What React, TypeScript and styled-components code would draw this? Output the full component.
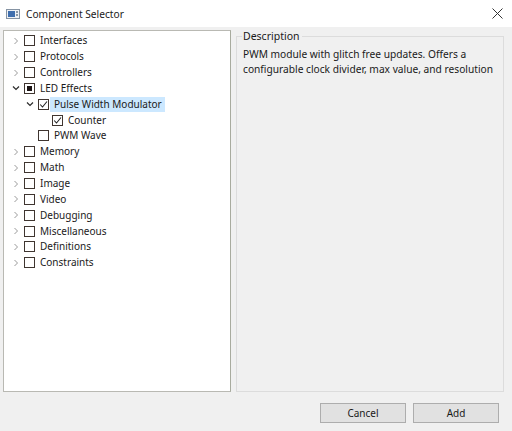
import React from "react";
import styled, { createGlobalStyle } from "styled-components";

const Global = createGlobalStyle`
  html, body { margin: 0; padding: 0; }
  body { width: 512px; height: 431px; overflow: hidden; background: #f0f0f0; font-family: "Noto Sans", "Open Sans", sans-serif; font-size: 10px; color: #000; }
`;

const Window = styled.div`
  width: 512px;
  height: 431px;
  display: flex;
  flex-direction: column;
  background: #f0f0f0;
`;

const TitleBar = styled.div`
  height: 27px;
  background: #fff;
  display: flex;
  align-items: center;
  padding: 0 0 0 6px;
  box-sizing: border-box;
`;

const TitleText = styled.span`
  margin-left: 6px;
  font-size: 10.2px;
  color: #1a1a1a;
  flex: 1;
`;

const CloseBtn = styled.div`
  width: 30px;
  height: 27px;
  display: flex;
  align-items: center;
  justify-content: center;
`;

const Body = styled.div`
  flex: 1;
  display: flex;
  flex-direction: column;
  padding: 3px 8px 10px 3px;
`;

const Panels = styled.div`
  display: flex;
  gap: 5px;
  height: 362px;
`;

const TreePanel = styled.div`
  width: 228px;
  box-sizing: border-box;
  background: #fff;
  border: 1px solid #b9b9b3;
  border-right-color: #a8ab9e;
  padding: 2px 0 0 0;
`;

const Row = styled.div<{ $level: number }>`
  height: 15.85px;
  display: flex;
  align-items: center;
  padding-left: ${(p) => 6 + p.$level * 14}px;
`;

const Arrow = styled.div`
  width: 12px;
  height: 12px;
  display: flex;
  align-items: center;
  justify-content: center;
  flex-shrink: 0;
`;

const Box = styled.div`
  width: 11px;
  height: 11px;
  box-sizing: border-box;
  border: 1px solid #3f3530;
  margin-left: 2px;
  display: flex;
  align-items: center;
  justify-content: center;
  flex-shrink: 0;
  background: #fff;
`;

const Partial = styled.div`
  width: 5px;
  height: 5px;
  background: #1c1414;
`;

const Label = styled.span<{ $selected?: boolean }>`
  margin-left: 1px;
  padding: 0 3px 0 4px;
  line-height: 15px;
  font-size: 10px;
  background: ${(p) => (p.$selected ? "#cce8ff" : "transparent")};
  color: #1a1a1a;
  white-space: nowrap;
`;

const Group = styled.div`
  flex: 1;
  position: relative;
  border: 1px solid #dcdcdc;
  margin-top: 6px;
  padding: 10px 2px 0 6px;
`;

const Legend = styled.span`
  position: absolute;
  top: -8px;
  left: 5px;
  padding: 0 2px 0 1px;
  font-size: 10.5px;
  background: #f0f0f0;
  color: #1a1a1a;
`;

const DescLine = styled.div`
  font-size: 10.2px;
  line-height: 15px;
  color: #1a1a1a;
  white-space: nowrap;
`;

const Buttons = styled.div`
  display: flex;
  justify-content: flex-end;
  gap: 7px;
  margin-top: 11px;
  padding-right: 5px;
`;

const Button = styled.button`
  width: 86px;
  height: 20px;
  box-sizing: border-box;
  border: 1px solid #adadad;
  background: #e1e1e1;
  font-family: inherit;
  font-size: 10px;
  color: #1a1a1a;
  padding: 0;
`;

const Chevron = ({ open }: { open?: boolean }) => (
  <svg width="8" height="8" viewBox="0 0 8 8">
    {open ? (
      <path d="M1 2.5 L4 5.5 L7 2.5" fill="none" stroke="#2b2b2b" strokeWidth="1.2" />
    ) : (
      <path d="M2.5 1 L5.5 4 L2.5 7" fill="none" stroke="#9a9a9a" strokeWidth="1" />
    )}
  </svg>
);

const Check = () => (
  <svg width="9" height="9" viewBox="0 0 9 9">
    <path d="M1.2 4.5 L3.5 7 L8 1.5" fill="none" stroke="#222" strokeWidth="1.1" />
  </svg>
);

type Item = { label: string; level: number; arrow?: "open" | "closed"; state?: "checked" | "partial"; selected?: boolean };

const items: Item[] = [
  { label: "Interfaces", level: 0, arrow: "closed" },
  { label: "Protocols", level: 0, arrow: "closed" },
  { label: "Controllers", level: 0, arrow: "closed" },
  { label: "LED Effects", level: 0, arrow: "open", state: "partial" },
  { label: "Pulse Width Modulator", level: 1, arrow: "open", state: "checked", selected: true },
  { label: "Counter", level: 2, state: "checked" },
  { label: "PWM Wave", level: 1 },
  { label: "Memory", level: 0, arrow: "closed" },
  { label: "Math", level: 0, arrow: "closed" },
  { label: "Image", level: 0, arrow: "closed" },
  { label: "Video", level: 0, arrow: "closed" },
  { label: "Debugging", level: 0, arrow: "closed" },
  { label: "Miscellaneous", level: 0, arrow: "closed" },
  { label: "Definitions", level: 0, arrow: "closed" },
  { label: "Constraints", level: 0, arrow: "closed" },
];

const AppIcon = () => (
  <svg width="14" height="10" viewBox="0 0 14 10">
    <rect x="0.5" y="0.5" width="13" height="9" fill="#eef1f5" stroke="#8593a3" />
    <rect x="2" y="2" width="7" height="6" fill="#3f6eae" />
    <rect x="10" y="2" width="2" height="2" fill="#8a98a8" />
    <rect x="10" y="5" width="2" height="2" fill="#8a98a8" />
  </svg>
);

export default function App() {
  return (
    <Window>
      <Global />
      <TitleBar>
        <AppIcon />
        <TitleText>Component Selector</TitleText>
        <CloseBtn>
          <svg width="11" height="11" viewBox="0 0 11 11">
            <path d="M0.5 0.5 L10.5 10.5 M10.5 0.5 L0.5 10.5" stroke="#333" strokeWidth="1" />
          </svg>
        </CloseBtn>
      </TitleBar>
      <Body>
        <Panels>
          <TreePanel>
            {items.map((it) => (
              <Row key={it.label} $level={it.level}>
                <Arrow>{it.arrow ? <Chevron open={it.arrow === "open"} /> : null}</Arrow>
                <Box>
                  {it.state === "partial" ? <Partial /> : it.state === "checked" ? <Check /> : null}
                </Box>
                <Label $selected={it.selected}>{it.label}</Label>
              </Row>
            ))}
          </TreePanel>
          <Group>
            <Legend>Description</Legend>
            <DescLine>PWM module with glitch free updates. Offers a</DescLine>
            <DescLine>configurable clock divider, max value, and resolution</DescLine>
          </Group>
        </Panels>
        <Buttons>
          <Button>Cancel</Button>
          <Button>Add</Button>
        </Buttons>
      </Body>
    </Window>
  );
}
